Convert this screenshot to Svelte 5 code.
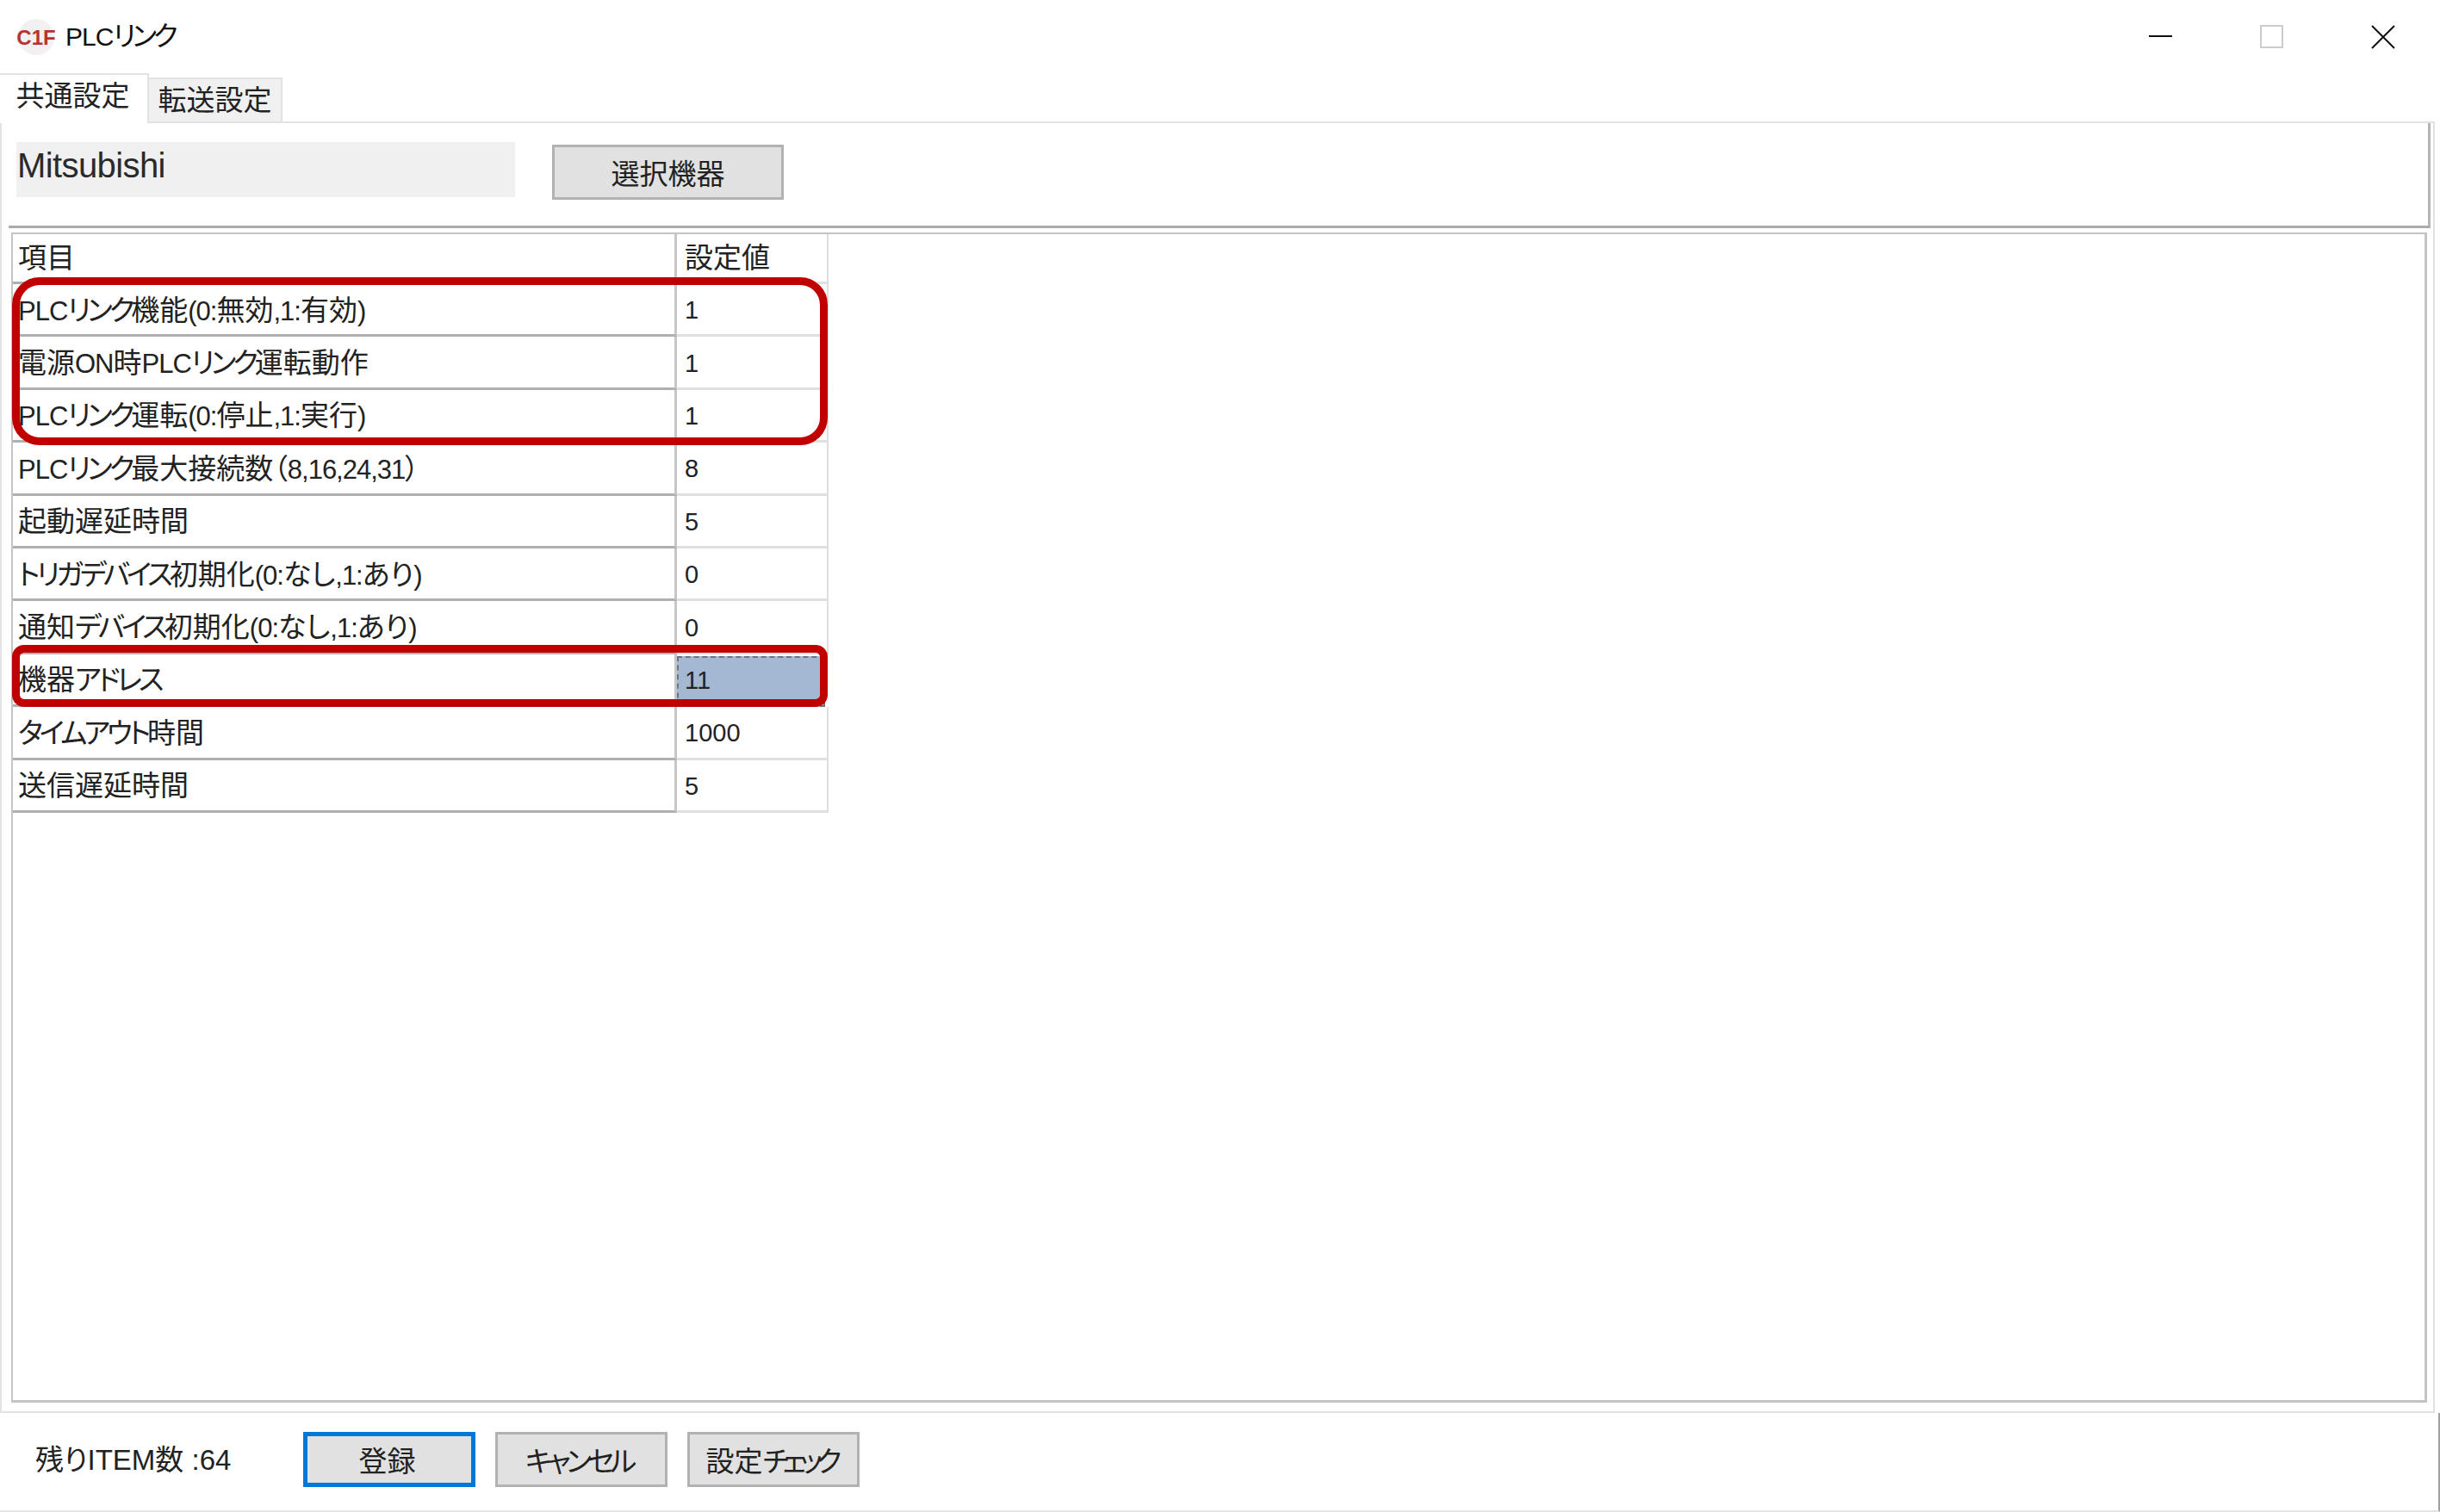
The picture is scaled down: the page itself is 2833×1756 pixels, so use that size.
<script>
	const rows = [
		{ label: 'PLCリンク機能(0:無効,1:有効)', value: '1' },
		{ label: '電源ON時PLCリンク運転動作', value: '1' },
		{ label: 'PLCリンク運転(0:停止,1:実行)', value: '1' },
		{ label: 'PLCリンク最大接続数（8,16,24,31）', value: '8' },
		{ label: '起動遅延時間', value: '5' },
		{ label: 'トリガデバイス初期化(0:なし,1:あり)', value: '0' },
		{ label: '通知デバイス初期化(0:なし,1:あり)', value: '0' },
		{ label: '機器アドレス', value: '11', selected: true },
		{ label: 'タイムアウト時間', value: '1000' },
		{ label: '送信遅延時間', value: '5' }
	];

	// the original UI font sets latin and katakana much tighter than kanji
	function runs(text) {
		return (text.match(/[\x20-\x7e]+|[\u30a0-\u30ff]+|[^\x20-\x7e\u30a0-\u30ff]+/g) ?? []).map((t) => ({
			t,
			kind: /^[\x20-\x7e]/.test(t) ? 'lat' : /^[\u30a0-\u30ff]/.test(t) ? 'kana' : ''
		}));
	}
</script>

{#snippet txt(text)}{#each runs(text) as r}<span class={r.kind}>{r.t}</span>{/each}{/snippet}

<div class="window">
	<header class="titlebar">
		<svg class="app-icon" viewBox="0 0 44 44" aria-hidden="true">
			<circle cx="22" cy="22" r="21" fill="#f2f0f0" />
			<text x="22" y="31" text-anchor="middle">C1F</text>
		</svg>
		<span class="title">{@render txt('PLCリンク')}</span>
		<div class="controls">
			<svg class="control" viewBox="0 0 28 28" aria-hidden="true">
				<path d="M0 13h27" stroke="#111" stroke-width="2" fill="none" />
			</svg>
			<svg class="control" viewBox="0 0 28 28" aria-hidden="true">
				<rect x="1" y="1" width="25" height="25" stroke="#ccc" stroke-width="2" fill="none" />
			</svg>
			<svg class="control" viewBox="0 0 28 28" aria-hidden="true">
				<path d="M1 1l26 26M27 1L1 27" stroke="#111" stroke-width="2" fill="none" />
			</svg>
		</div>
	</header>

	<nav class="tabs">
		<div class="tab active">共通設定</div>
		<div class="tab">転送設定</div>
	</nav>

	<main class="panel">
		<section class="device">
			<div class="device-name">Mitsubishi</div>
			<button class="btn select-btn">選択機器</button>
		</section>

		<section class="grid">
			<div class="table">
				<div class="row head">
					<div class="cell name">項目</div>
					<div class="cell val">設定値</div>
				</div>
				{#each rows as row}
					<div class="row">
						<div class="cell name"><span>{@render txt(row.label)}</span></div>
						<div class="cell val" class:selected={row.selected}><span>{@render txt(row.value)}</span></div>
					</div>
				{/each}
				<div class="mark mark-a"></div>
				<div class="mark mark-b"></div>
			</div>
		</section>
	</main>

	<footer class="footer">
		<span class="remaining">{@render txt('残りITEM数 :64')}</span>
		<button class="btn primary">登録</button>
		<button class="btn tight">{@render txt('キャンセル')}</button>
		<button class="btn tight check">{@render txt('設定チェック')}</button>
	</footer>
</div>

<style>
	:global(body) {
		background: #fff;
	}

	.window {
		width: 2833px;
		height: 1756px;
		display: flex;
		flex-direction: column;
		overflow: hidden;
		background: #fff;
		color: #222;
		font-family: 'Liberation Sans', 'Noto Sans CJK JP', sans-serif;
		font-size: 33px;
		font-feature-settings: 'palt';
	}

	.lat {
		font-size: 31px;
		letter-spacing: -1px;
	}

	.kana {
		letter-spacing: -4px;
	}

	.tight .kana {
		letter-spacing: -5px;
	}

	.check .kana {
		letter-spacing: -7px;
	}

	.titlebar {
		height: 85px;
		flex: none;
		display: flex;
		align-items: center;
		padding-left: 20px;
		box-sizing: border-box;
	}

	.app-icon {
		width: 44px;
		height: 44px;
	}

	.app-icon text {
		font-family: 'Liberation Sans', sans-serif;
		font-size: 24px;
		font-weight: 700;
		fill: #b5342f;
	}

	.title {
		margin-left: 12px;
		margin-top: -8px;
		font-size: 32px;
		color: #111;
	}

	.title .lat {
		font-size: 30px;
	}

	.controls {
		margin-left: auto;
		display: flex;
		gap: 101px;
		padding-right: 52px;
	}

	.control {
		width: 28px;
		height: 28px;
	}

	.tabs {
		height: 56px;
		flex: none;
		display: flex;
		align-items: flex-end;
	}

	.tab {
		width: 155px;
		height: 51px;
		box-sizing: border-box;
		background: #f0f0f0;
		border: 2px solid #e2e2e2;
		border-bottom: 0;
		border-left: 0;
		text-align: center;
		line-height: 49px;
	}

	.tab.active {
		width: 173px;
		height: 58px;
		margin-bottom: -2px;
		position: relative;
		z-index: 1;
		background: #fff;
		line-height: 50px;
		padding-right: 2px;
		border-left: 0;
	}

	.panel {
		flex: 1;
		min-height: 0;
		margin-right: 6px;
		display: flex;
		flex-direction: column;
		border: 2px solid #e2e2e2;
	}

	.device {
		height: 122px;
		flex: none;
		box-sizing: border-box;
		margin: 0 3px 0 8px;
		padding: 22px 0 0 9px;
		display: flex;
		align-items: flex-start;
		border-bottom: 3px solid #ababab;
		border-right: 3px solid #b5b5b5;
	}

	.device-name {
		width: 579px;
		height: 64px;
		background: #f0f0f0;
		font-size: 40px;
		letter-spacing: -0.6px;
		line-height: 54px;
		padding-left: 1px;
		box-sizing: border-box;
		color: #2a2a2a;
	}

	.btn {
		width: 200px;
		height: 64px;
		box-sizing: border-box;
		background: #e1e1e1;
		border: 3px solid #b2b2b2;
		border-radius: 0;
		padding: 0;
		color: #222;
		font: inherit;
		font-feature-settings: inherit;
	}

	.tight {
		padding-right: 6px;
	}

	.select-btn {
		width: 269px;
		margin: 3px 0 0 43px;
	}

	.grid {
		flex: 1;
		min-height: 0;
		margin: 5px 7px 10px 11px;
		border: 2px solid #c4c4c4;
		border-right-width: 3px;
		border-bottom-width: 3px;
	}

	.table {
		position: relative;
		width: 949px;
	}

	.row {
		height: 61.4px;
		display: grid;
		grid-template-columns: 771px 176px;
	}

	.row.head {
		height: 58px;
	}

	.head .cell {
		padding-bottom: 6px;
	}

	.cell {
		box-sizing: border-box;
		display: flex;
		align-items: center;
		white-space: nowrap;
	}

	.name {
		padding-left: 6px;
		padding-bottom: 3px;
		border-right: 3px solid #c6c6c6;
		border-bottom: 3px solid #b0b0b0;
	}

	.val {
		padding-left: 9px;
		border-right: 2px solid #dedede;
		border-bottom: 3px solid #e0e0e0;
	}

	.val :global(.lat) {
		font-size: 29px;
		letter-spacing: 0;
	}

	.val.selected {
		background: #a4b8d3;
		outline: 2px dashed #6d7480;
		outline-offset: -2px;
		margin: 2px 4px 0 0;
		padding-bottom: 2px;
	}

	.mark {
		position: absolute;
		left: -1px;
		width: 947px;
		box-sizing: border-box;
		border: 9px solid #c00000;
		pointer-events: none;
	}

	.mark-a {
		top: 50px;
		height: 195px;
		border-radius: 32px;
	}

	.mark-b {
		top: 477px;
		height: 72px;
		border-radius: 14px;
	}

	.footer {
		height: 115px;
		flex: none;
		box-sizing: border-box;
		display: flex;
		align-items: flex-start;
		padding: 22px 0 0 41px;
		gap: 23px;
		border-right: 2px solid #a0a0a0;
		border-bottom: 2px solid #e4e4e4;
	}

	.remaining {
		width: 288px;
		margin-top: 6px;
		font-size: 33px;
	}

	.remaining :global(.lat) {
		font-size: 33px;
		letter-spacing: 0;
	}

	.primary {
		border: 5px solid #0078d7;
		padding-right: 5px;
	}
</style>
